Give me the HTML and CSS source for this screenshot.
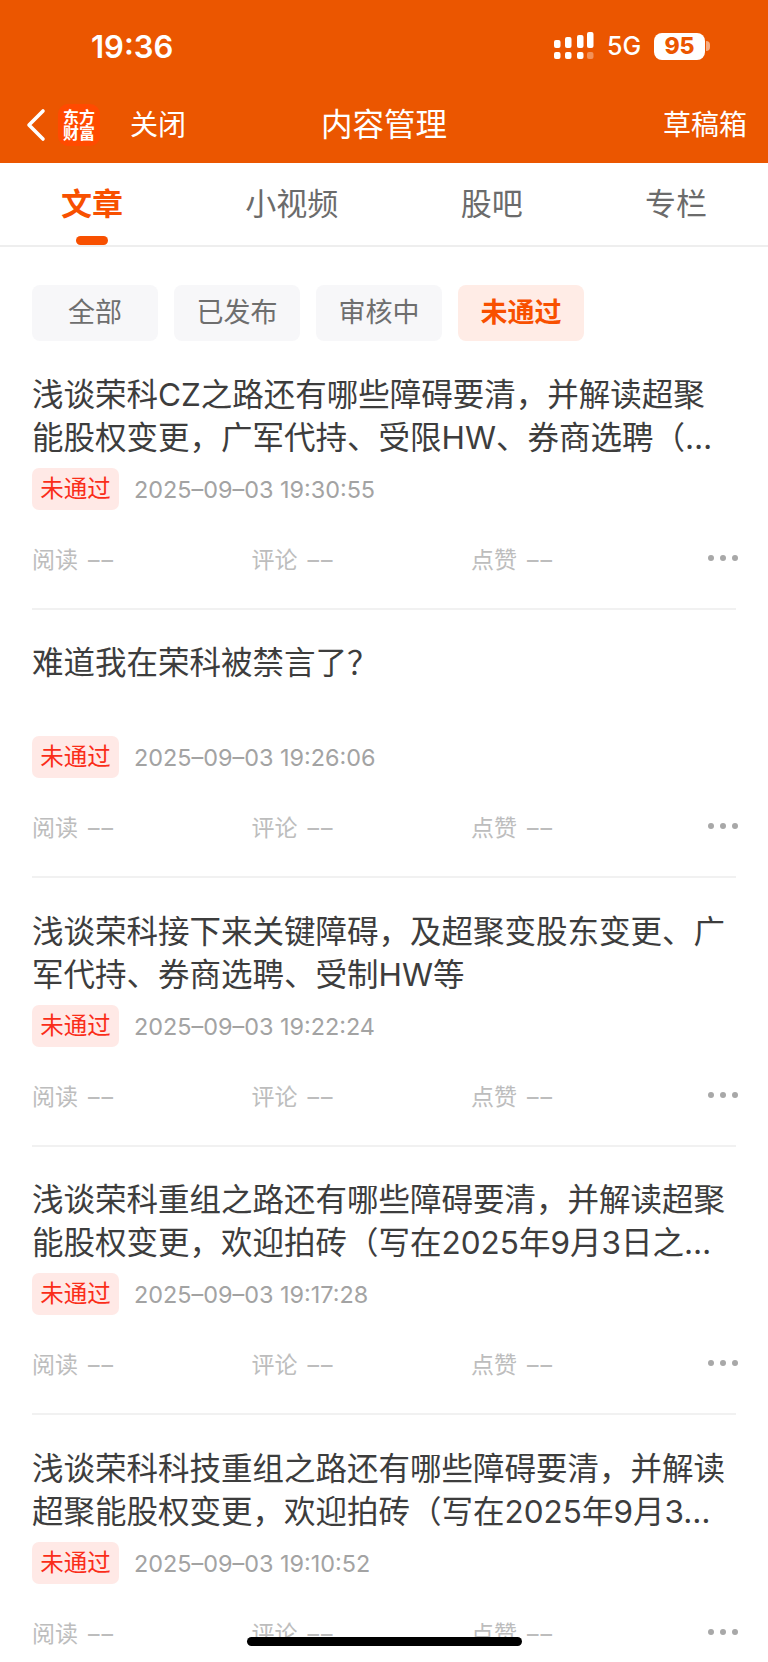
FILE: index.html
```html
<!DOCTYPE html>
<html lang="zh-CN">

<head>
    <meta charset="UTF-8" />
    <meta name="viewport" content="width=device-width, initial-scale=1.0" />
    <title>内容管理</title>
    <link rel="stylesheet" href="styles.css">
</head>

<body>
    <div class="page">
        <header class="top">
            <div class="status">
                <span class="time">19:36</span>
                <div class="status-right">
                    <svg class="signal" width="40" height="28" viewBox="0 0 40 28">
                        <rect x="0" y="8" width="6.5" height="8" rx="2" fill="#fff" />
                        <rect x="11" y="5" width="6.5" height="11" rx="2" fill="#fff" />
                        <rect x="23" y="3" width="6.5" height="13" rx="2" fill="#fff" />
                        <rect x="33" y="0" width="6.5" height="16" rx="2" fill="#fff" />
                        <rect x="0" y="20" width="6.5" height="7" rx="2" fill="#fff" />
                        <rect x="11" y="20" width="6.5" height="7" rx="2" fill="#fff" />
                        <rect x="23" y="20" width="6.5" height="7" rx="2" fill="#fff" />
                        <rect x="33" y="20" width="6.5" height="7" rx="2" fill="#fff" fill-opacity="0.35" />
                    </svg>
                    <span class="network">5G</span>
                    <div class="battery"><span class="battery-num">95</span></div>
                    <span class="battery-nub"></span>
                </div>
            </div>
            <nav class="nav">
                <div class="nav-left">
                    <svg class="back" width="20" height="34" viewBox="0 0 20 34">
                        <path d="M17 3 L3 17 L17 31" fill="none" stroke="#fff" stroke-width="3.6" stroke-linecap="round" stroke-linejoin="round" />
                    </svg>
                    <div class="logo">东方财富</div>
                    <span class="nav-link">关闭</span>
                </div>
                <div class="nav-title">内容管理</div>
                <div class="nav-right"><span class="nav-link">草稿箱</span></div>
            </nav>
        </header>

        <div class="tabs">
            <div class="tab active">文章</div>
            <div class="tab">小视频</div>
            <div class="tab">股吧</div>
            <div class="tab">专栏</div>
        </div>

        <div class="filters">
            <div class="chip">全部</div>
            <div class="chip">已发布</div>
            <div class="chip">审核中</div>
            <div class="chip on">未通过</div>
        </div>

        <ul class="list">
            <li class="item">
                <div class="item-title">浅谈荣科CZ之路还有哪些障碍要清，并解读超聚能股权变更，广军代持、受限HW、券商选聘（…</div>
                <div class="meta"><span class="badge">未通过</span><span class="date">2025–09–03 19:30:55</span></div>
                <div class="stats">
                    <span class="stat">阅读<span class="dash">––</span></span><span class="stat">评论<span class="dash">––</span></span><span class="stat">点赞<span class="dash">––</span></span>
                    <svg class="more" width="30" height="8" viewBox="0 0 30 8"><circle cx="3" cy="4" r="3" /><circle cx="15" cy="4" r="3" /><circle cx="27" cy="4" r="3" /></svg>
                </div>
            </li>
            <li class="item">
                <div class="item-title">难道我在荣科被禁言了？</div>
                <div class="meta"><span class="badge">未通过</span><span class="date">2025–09–03 19:26:06</span></div>
                <div class="stats">
                    <span class="stat">阅读<span class="dash">––</span></span><span class="stat">评论<span class="dash">––</span></span><span class="stat">点赞<span class="dash">––</span></span>
                    <svg class="more" width="30" height="8" viewBox="0 0 30 8"><circle cx="3" cy="4" r="3" /><circle cx="15" cy="4" r="3" /><circle cx="27" cy="4" r="3" /></svg>
                </div>
            </li>
            <li class="item">
                <div class="item-title">浅谈荣科接下来关键障碍，及超聚变股东变更、广军代持、券商选聘、受制HW等</div>
                <div class="meta"><span class="badge">未通过</span><span class="date">2025–09–03 19:22:24</span></div>
                <div class="stats">
                    <span class="stat">阅读<span class="dash">––</span></span><span class="stat">评论<span class="dash">––</span></span><span class="stat">点赞<span class="dash">––</span></span>
                    <svg class="more" width="30" height="8" viewBox="0 0 30 8"><circle cx="3" cy="4" r="3" /><circle cx="15" cy="4" r="3" /><circle cx="27" cy="4" r="3" /></svg>
                </div>
            </li>
            <li class="item">
                <div class="item-title">浅谈荣科重组之路还有哪些障碍要清，并解读超聚能股权变更，欢迎拍砖（写在2025年9月3日之…</div>
                <div class="meta"><span class="badge">未通过</span><span class="date">2025–09–03 19:17:28</span></div>
                <div class="stats">
                    <span class="stat">阅读<span class="dash">––</span></span><span class="stat">评论<span class="dash">––</span></span><span class="stat">点赞<span class="dash">––</span></span>
                    <svg class="more" width="30" height="8" viewBox="0 0 30 8"><circle cx="3" cy="4" r="3" /><circle cx="15" cy="4" r="3" /><circle cx="27" cy="4" r="3" /></svg>
                </div>
            </li>
            <li class="item">
                <div class="item-title">浅谈荣科科技重组之路还有哪些障碍要清，并解读超聚能股权变更，欢迎拍砖（写在2025年9月3…</div>
                <div class="meta"><span class="badge">未通过</span><span class="date">2025–09–03 19:10:52</span></div>
                <div class="stats">
                    <span class="stat">阅读<span class="dash">––</span></span><span class="stat">评论<span class="dash">––</span></span><span class="stat">点赞<span class="dash">––</span></span>
                    <svg class="more" width="30" height="8" viewBox="0 0 30 8"><circle cx="3" cy="4" r="3" /><circle cx="15" cy="4" r="3" /><circle cx="27" cy="4" r="3" /></svg>
                </div>
            </li>
        </ul>

        <div class="home-bar"></div>
    </div>
</body>

</html>
```

FILE: styles.css
```css
* {
    box-sizing: border-box;
}

body {
    margin: 0;
    padding: 0;
    background: white;
    font-family: Inter, "Noto Sans CJK SC", sans-serif;
}

.page {
    position: relative;
    width: 768px;
    height: 1662px;
    overflow: hidden;
    background: white;
}

.top {
    height: 163px;
    background: #eb5600;
    color: white;
}

.status {
    display: flex;
    align-items: center;
    justify-content: space-between;
    height: 92px;
    padding: 0 58px 0 91px;
}

.time {
    font-size: 31px;
    font-weight: 600;
}

.status-right {
    display: flex;
    align-items: center;
}

.signal {
    display: block;
}

.network {
    width: 47px;
    margin-left: 13px;
    font-size: 25px;
    font-weight: 500;
}

.battery {
    display: flex;
    align-items: center;
    justify-content: center;
    width: 51px;
    height: 27px;
    background: white;
    border-radius: 8px;
}

.battery-num {
    color: #eb5600;
    font-size: 23px;
    font-weight: 800;
    line-height: 27px;
}

.battery-nub {
    width: 4px;
    height: 10px;
    margin-left: 1px;
    background: rgba(255, 255, 255, 0.5);
    border-radius: 0 4px 4px 0;
}

.nav {
    display: grid;
    grid-template-columns: 1fr auto 1fr;
    align-items: center;
    height: 71px;
    padding: 0 21px 6px;
}

.nav-left {
    display: flex;
    align-items: center;
    padding-left: 5px;
}

.back {
    display: block;
    flex-shrink: 0;
}

.logo {
    flex-shrink: 0;
    width: 42px;
    height: 42px;
    margin-left: 12px;
    padding: 5px;
    background: #ff4a00;
    border-radius: 10px;
    color: white;
    font-size: 16px;
    font-weight: 700;
    line-height: 16px;
    text-align: center;
}

.nav-link {
    font-size: 28px;
    line-height: 40px;
}

.nav-left .nav-link {
    margin-left: 30px;
}

.nav-title {
    font-size: 31.5px;
    line-height: 40px;
}

.nav-right {
    text-align: right;
}

.tabs {
    display: flex;
    justify-content: space-between;
    height: 84px;
    padding: 0 61px;
    border-bottom: 2px solid #eeeeee;
}

.tab {
    display: flex;
    flex-direction: column;
    align-items: center;
    padding-top: 19px;
    color: #6b6b6b;
    font-size: 31px;
    line-height: 44px;
}

.tab.active {
    color: #f85000;
    font-weight: 700;
}

.tab.active::after {
    content: "";
    width: 32px;
    height: 9px;
    margin-top: 10px;
    background: #f85000;
    border-radius: 5px;
}

.filters {
    display: flex;
    gap: 16px;
    padding: 38px 32px 0;
}

.chip {
    width: 126px;
    height: 56px;
    background: #f7f7f9;
    border-radius: 8px;
    color: #6e6e6e;
    font-size: 27px;
    line-height: 56px;
    text-align: center;
}

.chip.on {
    background: #ffece6;
    color: #f85000;
    font-weight: 700;
}

.list {
    list-style: none;
    margin: 0;
    padding: 0 32px;
}

.item {
    height: 268.5px;
    padding-top: 31.5px;
    border-top: 2px solid #f1f1f1;
}

.item:first-child {
    height: 266.5px;
    border-top: 0;
}

.item-title {
    width: 696px;
    height: 86px;
    color: #3d3d3d;
    font-size: 31.5px;
    line-height: 43px;
}

.meta {
    display: flex;
    align-items: center;
    margin-top: 9px;
}

.badge {
    width: 87px;
    height: 42px;
    background: #ffe9e6;
    border-radius: 7px;
    color: #fa2d19;
    font-size: 23.5px;
    line-height: 41px;
    text-align: center;
}

.date {
    margin-left: 15px;
    padding-top: 1px;
    color: #a3a3a3;
    font-size: 23.4px;
    white-space: nowrap;
}

.stats {
    display: flex;
    align-items: center;
    height: 40px;
    margin-top: 28px;
}

.stat {
    width: 219.5px;
    color: #bdbdbd;
    font-size: 23px;
}

.dash {
    margin-left: 10px;
    letter-spacing: 2px;
}

.more {
    display: block;
    margin-left: auto;
    margin-right: -2px;
    fill: #a8a8a8;
}

.home-bar {
    position: absolute;
    left: 247px;
    bottom: 16px;
    width: 275px;
    height: 9px;
    background: black;
    border-radius: 5px;
}
```
